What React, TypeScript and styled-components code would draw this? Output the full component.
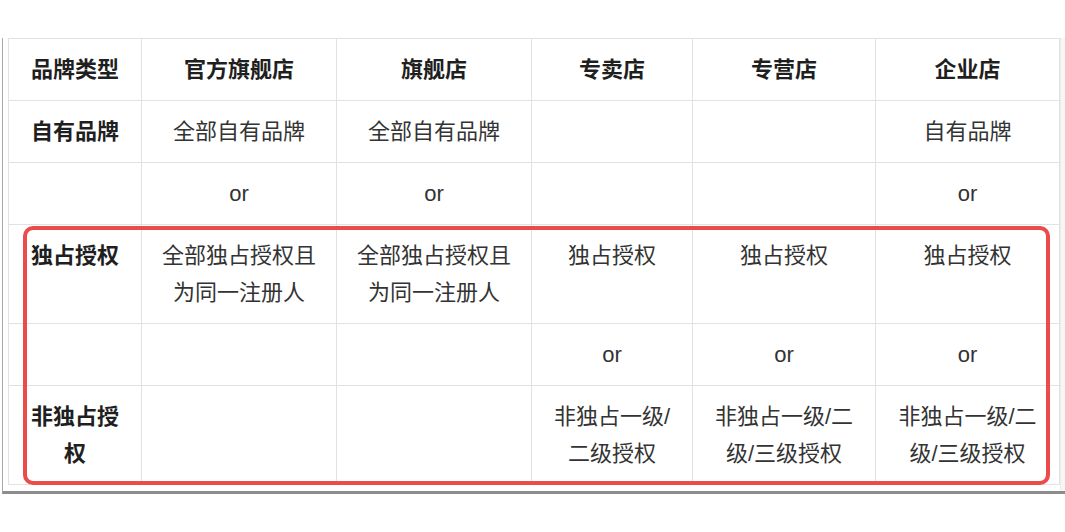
import styled, { createGlobalStyle } from "styled-components";

const Global = createGlobalStyle`
  html, body {
    margin: 0;
    padding: 0;
    background: #ffffff;
  }
  body {
    font-family: "Liberation Sans", "Noto Sans CJK SC", sans-serif;
  }
`

const Screen = styled.div`
  width: 1065px;
  height: 532px;
  overflow: hidden;
  background: #ffffff;
  padding-top: 38px;
  box-sizing: border-box;
`

const Viewport = styled.div`
  display: flex;
  height: 453px;
  margin-left: 2px;
  border-left: 1px solid #a9a9a9;
  border-bottom: 3px solid #8c8c8c;
`

const Content = styled.div`
  position: relative;
  padding-left: 5px;
`

const Gutter = styled.div`
  flex: 1;
  background: #f6f6f6;
  border-left: 1px solid #ececec;
`

const Table = styled.table`
  border-collapse: collapse;
  table-layout: fixed;
  width: 1051px;
  color: #333333;
  font-size: 22px;
  line-height: 37px;
`

const Cell = styled.td<{ $bold?: boolean }>`
  border: 1px solid #e2e2e2;
  padding: 12px 18px;
  text-align: center;
  vertical-align: top;
  font-weight: ${p => (p.$bold ? 700 : 400)};
  color: ${p => (p.$bold ? "#1f1f1f" : "#333333")};
`

const Highlight = styled.div`
  position: absolute;
  left: 20px;
  top: 188px;
  width: 1027px;
  height: 259px;
  box-sizing: border-box;
  border: 4px solid #eb4b4b;
  border-radius: 10px;
  pointer-events: none;
`

const widths = [133, 195, 195, 161, 183, 184]

const header = ["品牌类型", "官方旗舰店", "旗舰店", "专卖店", "专营店", "企业店"]

const rows: string[][] = [
  ["自有品牌", "全部自有品牌", "全部自有品牌", "", "", "自有品牌"],
  ["", "or", "or", "", "", "or"],
  ["独占授权", "全部独占授权且为同一注册人", "全部独占授权且为同一注册人", "独占授权", "独占授权", "独占授权"],
  ["", "", "", "or", "or", "or"],
  ["非独占授权", "", "", "非独占一级/二级授权", "非独占一级/二级/三级授权", "非独占一级/二级/三级授权"],
]

function App() {
  return (
    <Screen>
      <Global />
      <Viewport>
        <Content>
          <Table>
            <colgroup>
              {widths.map((w, i) => (
                <col key={i} style={{ width: w }} />
              ))}
            </colgroup>
            <thead>
              <tr>
                {header.map(h => (
                  <Cell as="th" key={h} $bold>
                    {h}
                  </Cell>
                ))}
              </tr>
            </thead>
            <tbody>
              {rows.map((r, i) => (
                <tr key={i}>
                  {r.map((c, j) => (
                    <Cell key={j} $bold={j === 0}>
                      {c}
                    </Cell>
                  ))}
                </tr>
              ))}
            </tbody>
          </Table>
          <Highlight />
        </Content>
        <Gutter />
      </Viewport>
    </Screen>
  )
}

export default App;
